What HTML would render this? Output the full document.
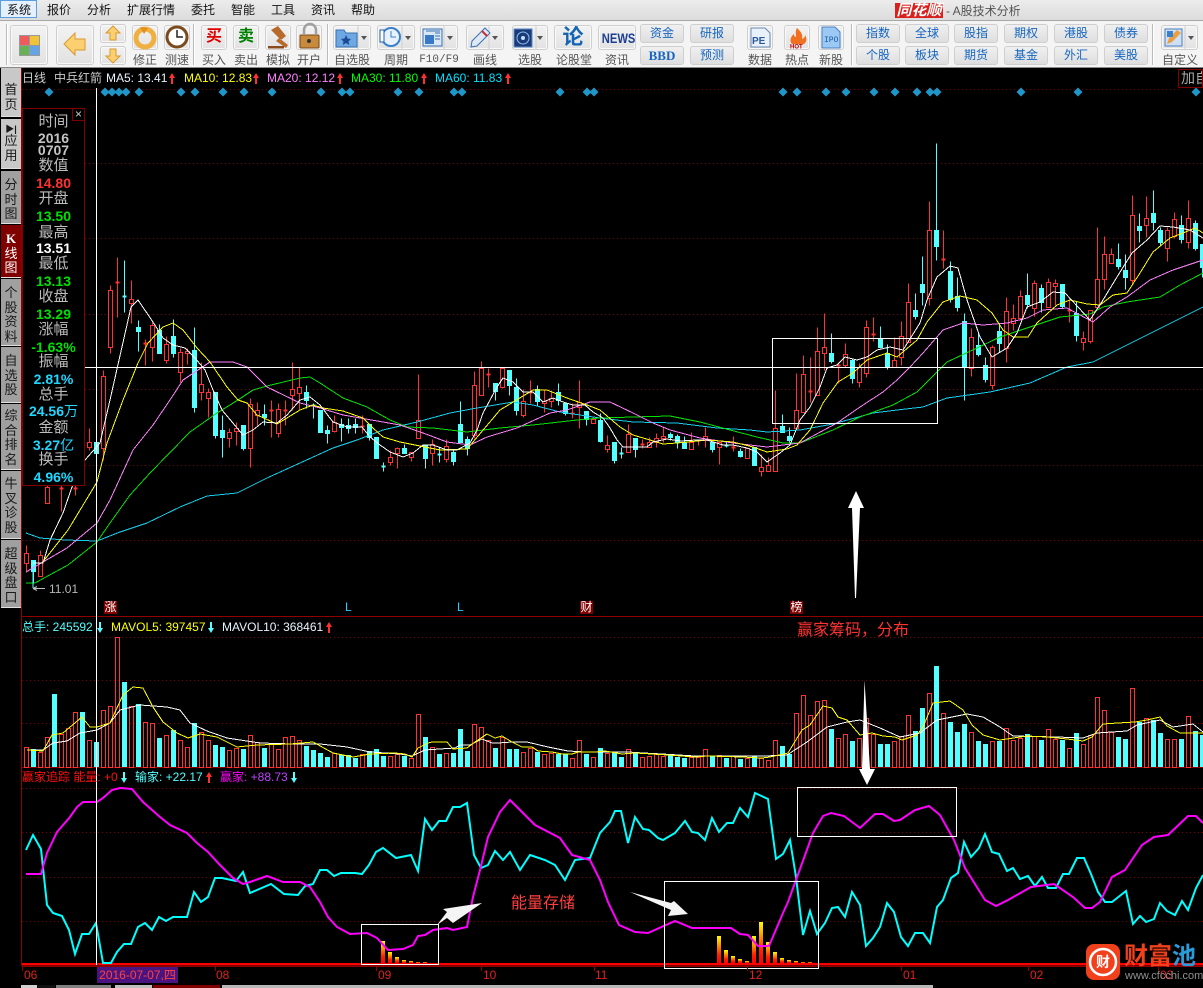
<!DOCTYPE html>
<html><head><meta charset="utf-8"><title>A股技术分析</title>
<style>
html,body{margin:0;padding:0;width:1203px;height:988px;overflow:hidden;background:#000}
body{position:relative;font-family:"Liberation Sans","WenQuanYi Zen Hei","Noto Sans CJK SC",sans-serif;font-size:12px}
.a{position:absolute;white-space:nowrap}
#menu{position:absolute;left:0;top:0;width:1203px;height:20px;background:linear-gradient(#ececec,#dcdcdc);border-bottom:1px solid #a8a8a8}
#tool{position:absolute;left:0;top:21px;width:1203px;height:46px;background:#f4f4f4;border-bottom:1px solid #8a8a8a}
.m{position:absolute;top:3px;color:#111;font-size:12px;line-height:14px}
.b{position:absolute;box-sizing:border-box;background:linear-gradient(#f2f2f2,#e2e2e2);border:1px solid #cfcfcf;border-radius:3px;box-shadow:inset 0 0 0 1px #f8f8f8}
.l{position:absolute;top:53px;color:#555;font-size:12px;line-height:14px;transform:translateX(-50%);white-space:nowrap}
.g{position:absolute;box-sizing:border-box;width:44px;height:19px;background:linear-gradient(#f0f0f0,#dedede);border:1px solid #cfcfcf;border-radius:3px;color:#1565c0;font-size:12px;line-height:17px;text-align:center}
.h{position:absolute;top:24px;width:1px;height:41px;background:#bbb;border-right:1px solid #fff}
.t{position:absolute;left:1px;width:20px;box-sizing:border-box;background:#a0a0a0;color:#1a1a1a;font-size:13px;line-height:14.5px;text-align:center;padding-top:7px;border-bottom:1px solid #e0e0e0}
#info{position:absolute;left:22px;top:108px;width:63px;height:378px;box-sizing:border-box;background:#000;border:1px solid #800000}
.r{position:absolute;left:0;width:61px;text-align:center;white-space:nowrap;color:#bdbdbd;font-size:15px;line-height:16px}
.n{font-weight:bold;font-size:14px}
.sq{position:absolute;width:13px;height:13px;background:#800000;color:#fff;font-size:12px;line-height:13px;text-align:center}
</style></head><body>
<div id="menu">
<div class="a" style="left:0;top:0;width:37px;height:18px;box-sizing:border-box;border:1px solid #5aa0e0;background:#e4f0fb"></div>
<span class="m" style="left:7px">系统</span><span class="m" style="left:47px">报价</span><span class="m" style="left:87px">分析</span><span class="m" style="left:127px">扩展行情</span><span class="m" style="left:191px">委托</span><span class="m" style="left:231px">智能</span><span class="m" style="left:271px">工具</span><span class="m" style="left:311px">资讯</span><span class="m" style="left:351px">帮助</span>
<div class="a" style="left:895px;top:3px;width:48px;height:15px;background:#d8201c;color:#fff;font-weight:bold;font-style:italic;font-size:15px;line-height:15px;text-align:center">同花顺</div>
<span class="a" style="left:946px;top:4px;color:#555;font-size:12px;line-height:14px">- A股技术分析</span>
</div>
<div id="tool"></div>
<div class="h" style="left:6px"></div><div class="h" style="left:193px"></div><div class="h" style="left:327px"></div><div class="h" style="left:851px"></div><div class="h" style="left:1152px"></div>
<div class="b" style="left:10px;top:25px;width:38px;height:40px"></div>
<div class="b" style="left:56px;top:25px;width:38px;height:40px"></div>
<div class="b" style="left:100px;top:24px;width:26px;height:19px"></div>
<div class="b" style="left:100px;top:46px;width:26px;height:19px"></div>
<div class="b" style="left:132px;top:25px;width:26px;height:25px"></div>
<div class="b" style="left:164px;top:25px;width:26px;height:25px"></div>
<div class="b" style="left:201px;top:25px;width:26px;height:25px"></div>
<div class="b" style="left:233px;top:25px;width:26px;height:25px"></div>
<div class="b" style="left:265px;top:25px;width:26px;height:25px"></div>
<div class="b" style="left:296px;top:25px;width:26px;height:25px"></div>
<div class="b" style="left:333px;top:25px;width:38px;height:25px"></div>
<div class="b" style="left:377px;top:25px;width:38px;height:25px"></div>
<div class="b" style="left:420px;top:25px;width:38px;height:25px"></div>
<div class="b" style="left:466px;top:25px;width:38px;height:25px"></div>
<div class="b" style="left:512px;top:25px;width:36px;height:25px"></div>
<div class="b" style="left:554px;top:25px;width:38px;height:25px"></div>
<div class="b" style="left:598px;top:25px;width:38px;height:25px"></div>
<div class="b" style="left:747px;top:25px;width:26px;height:25px"></div>
<div class="b" style="left:784px;top:25px;width:26px;height:25px"></div>
<div class="b" style="left:818px;top:25px;width:26px;height:25px"></div>
<div class="b" style="left:1161px;top:25px;width:37px;height:25px"></div>
<span class="l" style="left:145px">修正</span><span class="l" style="left:177px">测速</span><span class="l" style="left:214px">买入</span><span class="l" style="left:246px">卖出</span><span class="l" style="left:278px">模拟</span><span class="l" style="left:309px">开户</span><span class="l" style="left:352px">自选股</span><span class="l" style="left:396px">周期</span><span class="l" style="left:439px;font-family:'Liberation Mono',monospace;font-size:11px">F10/F9</span><span class="l" style="left:485px">画线</span><span class="l" style="left:530px">选股</span><span class="l" style="left:574px">论股堂</span><span class="l" style="left:617px">资讯</span><span class="l" style="left:760px">数据</span><span class="l" style="left:797px">热点</span><span class="l" style="left:831px">新股</span><span class="l" style="left:1180px">自定义</span>
<span class="a" style="left:204px;top:28px;width:20px;text-align:center;color:#e00000;font-size:16px;font-weight:bold;line-height:18px">买</span>
<span class="a" style="left:236px;top:28px;width:20px;text-align:center;color:#008000;font-size:16px;font-weight:bold;line-height:18px">卖</span>
<span class="a" style="left:556px;top:26px;width:34px;text-align:center;color:#1464b4;font-size:21px;font-weight:bold;line-height:23px">论</span>
<span class="a" style="left:598px;top:30px;width:38px;text-align:center;color:#1c3f94;font-size:14px;font-weight:bold;line-height:16px;transform:scaleX(.8)">NEWS</span>
<div class="g" style="left:640px;top:24px">资金</div><div class="g" style="left:640px;top:46px;font-family:'Liberation Serif',serif;font-weight:bold;font-size:13px">BBD</div>
<div class="g" style="left:690px;top:24px">研报</div><div class="g" style="left:690px;top:46px">预测</div>
<div class="g" style="left:856px;top:24px">指数</div><div class="g" style="left:905px;top:24px">全球</div><div class="g" style="left:954px;top:24px">股指</div><div class="g" style="left:1004px;top:24px">期权</div><div class="g" style="left:1054px;top:24px">港股</div><div class="g" style="left:1104px;top:24px">债券</div>
<div class="g" style="left:856px;top:46px">个股</div><div class="g" style="left:905px;top:46px">板块</div><div class="g" style="left:954px;top:46px">期货</div><div class="g" style="left:1004px;top:46px">基金</div><div class="g" style="left:1054px;top:46px">外汇</div><div class="g" style="left:1104px;top:46px">美股</div>

<svg class="a" style="left:0;top:0" width="1203" height="988" viewBox="0 0 1203 988" xmlns="http://www.w3.org/2000/svg">
<defs><linearGradient id="e" x1="0" y1="0" x2="0" y2="1"><stop offset="0" stop-color="#ffff00"/><stop offset=".3" stop-color="#ffa000"/><stop offset=".7" stop-color="#ff2000"/><stop offset="1" stop-color="#ff0000"/></linearGradient></defs>
<!-- toolbar icons -->
<g stroke="#999" stroke-width="1"><rect x="19.5" y="35.5" width="10" height="10" fill="#f05a5a"/><rect x="29.5" y="35.5" width="10" height="10" fill="#f0c438"/><rect x="19.5" y="45.5" width="10" height="10" fill="#66b055"/><rect x="29.5" y="45.5" width="10" height="10" fill="#64a4e4"/></g>
<path d="M64 44L75 33V39H85V50H75V55Z" fill="#fbd070" stroke="#d89a30"/>
<path d="M113 26L120 33H116V40H110V33H106Z" fill="#fbd070" stroke="#d89a30"/>
<path d="M113 63L120 56H116V49H110V56H106Z" fill="#fbd070" stroke="#d89a30"/>
<circle cx="145" cy="38" r="9" fill="none" stroke="#f0b040" stroke-width="5"/><path d="M140 27l8 1-4 6z" fill="#e09020"/>
<circle cx="177" cy="37" r="10" fill="#fff" stroke="#7a4a1c" stroke-width="3"/><path d="M177 30v7h6" fill="none" stroke="#222" stroke-width="1.5"/>
<path d="M271 30l7-4 8 10-5 4zM279 38l-3 3 10 7 2-3z" fill="#b86a2c"/><rect x="268" y="46" width="16" height="2.5" fill="#8c4a1c"/>
<path d="M304 34v-4a6 6 0 0 1 12 0v4" fill="none" stroke="#a0a0a0" stroke-width="2.5"/><rect x="300" y="35" width="19" height="13" rx="1" fill="#c88a3c" stroke="#7a4a1c"/><circle cx="309" cy="41" r="2" fill="#333"/>
<path d="M336 30h8l2 3h11v14h-21z" fill="#6ea8e4" stroke="#3a70b0"/><path d="M346 35l1.500 3.500 3.500.5-2.500 2.500.7 3.500-3.200-2-3.200 2 .7-3.500-2.500-2.500 3.500-.5z" fill="#1c4a94"/>
<path d="M358 26v23" stroke="#cfcfcf"/><path d="M361 36h6l-3 4z M405 36h6l-3 4z M447 36h6l-3 4z M492 36h6l-3 4z M537 36h6l-3 4z M1188 36h6l-3 4z" fill="#555"/>
<path d="M402 26v23M444 26v23M489 26v23M536 26v23M1185 26v23" stroke="#cfcfcf"/>
<circle cx="391" cy="37" r="9" fill="#e8f2ff" stroke="#3a80c8" stroke-width="2"/><path d="M391 31v6h5" fill="none" stroke="#3a80c8"/><rect x="380" y="30" width="4" height="12" fill="#fff" stroke="#2060b0"/>
<rect x="423" y="29" width="19" height="17" fill="#d8e8f8" stroke="#3a70b0"/><rect x="425" y="35" width="9" height="9" fill="#3a78c8"/><path d="M435 33h5M435 36h5M435 39h5M426 31h14" stroke="#3a70b0"/>
<path d="M471 47l1-6 13-13 5 5-13 13z" fill="#dfe8f4" stroke="#3a70b0"/><path d="M482 31l5 5" stroke="#c83030" stroke-width="2"/>
<rect x="514" y="29" width="18" height="18" fill="#1c3a78" stroke="#5a8ac8"/><circle cx="523" cy="38" r="6" fill="none" stroke="#8ac0f0"/><circle cx="523" cy="38" r="2" fill="#c0e0ff"/>
<path d="M751 28h14l5 5v14h-19z" fill="#e8f0fa" stroke="#6a8ab0"/><text x="752" y="44" font-size="10" font-weight="bold" fill="#2a5a9a" font-family="Liberation Sans">PE</text>
<path d="M797 28c4 4 6 6 5 11 3-1 3-3 3-4 2 3 2 7-1 9h-12c-3-3-1-8 2-10 0 2 1 3 2 3 0-3-1-6 1-9z" fill="#f07020"/><text x="790" y="48.500" font-size="6" font-weight="bold" fill="#c00000" font-family="Liberation Sans">HOT</text>
<path d="M822 27h13l5 5v16h-18z" fill="#9cc8f4" stroke="#4a80c0"/><text x="824" y="42" font-size="8" fill="#1c5aa0" font-family="Liberation Mono">IPO</text>
<rect x="1165" y="29" width="17" height="17" fill="#cfe0f4" stroke="#4a80c0"/><path d="M1167 44l2-6 8-8 4 3-9 9z" fill="#e8a040"/><rect x="1167" y="31" width="6" height="6" fill="#3a80d0"/>
<!-- grid -->
<g stroke="#800000" stroke-dasharray="1 3" fill="none"><path d="M22 89.500H1180M85 163.500H1203M85 238.500H1203M85 314.500H1203M85 389.500H1203M85 465.500H1203M22 540.500H1203M22 637.500H1203M22 680.500H1203M22 723.500H1203M22 788.500H1203M22 832.500H1203M22 877.500H1203M22 921.500H1203"/></g>
<path d="M21.500 68V966M22 616.500H1203M22 767.500H1203M22 966.500H1203" stroke="#900000"/>
<g transform="translate(.5 .5)" fill="none">
<!-- candles red -->
<path stroke="#ff3232" d="M26 545V572M40 550V576M47 470V503M61 480V511M75 480V495M89 428V450M96 453V465M103 370V460M110 285V353M117 257V317M131 280V323M145 339V365M152 322V361M166 336V363M180 348V382M187 348V364M201 362V400M208 388V417M229 428V447M236 422V445M250 398V467M257 402V425M271 400V437M278 403V437M285 400V425M292 362V410M299 367V410M334 415V432M362 415V433M390 450V465M397 447V468M411 452V461M418 374V438M432 439V465M446 439V462M474 371V438M481 361V395M488 368V387M502 367V388M523 389V417M530 380V403M544 390V412M551 390V407M572 403V418M579 380V428M593 417V423M607 435V452M628 424V452M642 439V448M649 437V447M656 433V447M663 427V442M691 432V449M698 440V445M705 427V447M719 442V464M733 436V451M747 448V458M761 454V476M768 457V471M775 390V471M796 373V428M803 355V412M810 357V402M817 327V395M824 313V370M838 362V383M845 343V367M859 363V387M866 320V377M873 317V341M894 337V367M901 321V365M908 283V342M929 201V305M943 230V268M971 328V376M992 345V389M1006 297V362M1013 304V330M1020 290V320M1034 280V316M1048 278V307M1055 279V305M1069 300V322M1083 331V350M1090 310V343M1097 227V310M1104 236V289M1111 248V263M1132 195V283M1146 196V237M1167 227V261M1174 212V238M1188 200V248"/>
<path stroke="#ff3232" fill="#000" d="M24 553h4V563h-4zM38 555h4V576h-4zM45 487h4V503h-4zM87 442h4V447h-4zM101 376h4V448h-4zM108 290h4V347h-4zM129 299h4V303h-4zM150 325h4V347h-4zM164 344h4V360h-4zM178 352h4V372h-4zM185 351h4V353h-4zM199 384h4V392h-4zM206 392h4V398h-4zM227 432h4V438h-4zM234 428h4V431h-4zM248 404h4V448h-4zM255 410h4V415h-4zM276 409h4V433h-4zM290 389h4V395h-4zM297 387h4V393h-4zM332 422h4V431h-4zM388 457h4V462h-4zM395 448h4V453h-4zM409 452h4V457h-4zM416 420h4V438h-4zM430 444h4V453h-4zM444 446h4V459h-4zM472 385h4V435h-4zM479 368h4V395h-4zM500 368h4V387h-4zM521 401h4V415h-4zM542 401h4V403h-4zM549 398h4V401h-4zM577 402h4V407h-4zM591 419h4V423h-4zM605 445h4V449h-4zM626 434h4V452h-4zM647 442h4V447h-4zM654 438h4V442h-4zM661 436h4V438h-4zM689 442h4V449h-4zM703 436h4V440h-4zM717 442h4V447h-4zM745 448h4V458h-4zM759 467h4V471h-4zM766 465h4V471h-4zM773 428h4V471h-4zM794 410h4V428h-4zM801 374h4V412h-4zM815 351h4V395h-4zM822 347h4V353h-4zM843 354h4V365h-4zM857 367h4V382h-4zM864 327h4V373h-4zM892 360h4V367h-4zM899 336h4V357h-4zM906 302h4V342h-4zM927 230h4V298h-4zM969 337h4V368h-4zM990 347h4V385h-4zM1004 311h4V348h-4zM1011 318h4V323h-4zM1018 296h4V318h-4zM1032 283h4V308h-4zM1046 282h4V307h-4zM1053 283h4V286h-4zM1081 338h4V342h-4zM1088 310h4V341h-4zM1095 279h4V307h-4zM1102 254h4V279h-4zM1109 254h4V263h-4zM1130 215h4V280h-4zM1144 218h4V225h-4zM1165 230h4V248h-4zM1172 219h4V236h-4zM1186 218h4V242h-4z"/>
<path stroke="#ff3232" stroke-width="2" d="M59 488h4M73 488h4M115 282h4M143 343h4M269 410h4M283 410h4M360 426h4M486 374h4M528 392h4M570 413h4M640 444h4M696 440h4M731 447h4M808 391h4M836 365h4M871 334h4M941 259h4M1067 310h4"/>
<!-- candles cyan -->
<path stroke="#54ffff" d="M33 560V583M96 430V453M124 260V312M138 320V351M159 324V353M173 319V357M194 327V412M215 392V438M222 415V457M243 425V450M264 404V425M306 385V408M313 403V418M327 425V443M341 418V441M348 418V433M355 418V433M369 424V440M383 462V471M404 444V453M425 444V468M439 447V462M453 450V465M460 401V442M467 436V455M495 383V400M509 370V395M516 378V415M537 385V406M558 383V405M565 402V415M586 411V425M600 413V442M614 442V463M621 447V458M635 438V457M670 432V440M677 434V448M684 436V448M712 442V452M726 442V447M740 448V457M782 414V432M789 427V442M831 333V363M852 358V383M880 326V347M887 344V369M915 293V319M922 256V305M936 143V260M950 261V302M957 277V311M964 313V400M978 333V356M985 357V382M999 323V352M1027 273V308M1041 284V312M1062 284V308M1076 301V341M1118 243V269M1125 254V289M1139 213V242M1153 190V230M1160 227V246M1181 215V243M1195 220V250M1202 244V277"/>
<path stroke="#54ffff" fill="#54ffff" d="M31 560h4V571h-4zM94 442h4V453h-4zM136 327h4V331h-4zM157 330h4V353h-4zM171 336h4V353h-4zM192 350h4V407h-4zM213 392h4V435h-4zM220 430h4V437h-4zM241 425h4V448h-4zM262 414h4V417h-4zM304 392h4V400h-4zM318 410h4V432h-4zM325 430h4V433h-4zM339 424h4V427h-4zM346 425h4V428h-4zM353 424h4V427h-4zM367 424h4V437h-4zM374 437h4V458h-4zM402 448h4V453h-4zM423 445h4V458h-4zM451 452h4V461h-4zM458 424h4V442h-4zM465 439h4V448h-4zM493 383h4V391h-4zM507 370h4V385h-4zM514 387h4V410h-4zM535 389h4V401h-4zM556 392h4V400h-4zM563 403h4V413h-4zM584 411h4V419h-4zM598 420h4V441h-4zM612 442h4V460h-4zM633 438h4V449h-4zM668 434h4V437h-4zM675 436h4V442h-4zM682 442h4V448h-4zM710 442h4V449h-4zM738 451h4V456h-4zM752 447h4V465h-4zM780 426h4V432h-4zM787 436h4V440h-4zM829 353h4V361h-4zM850 360h4V378h-4zM878 339h4V347h-4zM885 353h4V367h-4zM913 310h4V316h-4zM920 284h4V292h-4zM934 230h4V246h-4zM948 271h4V299h-4zM955 296h4V307h-4zM962 321h4V367h-4zM976 345h4V354h-4zM983 365h4V379h-4zM997 331h4V343h-4zM1025 295h4V304h-4zM1039 288h4V302h-4zM1060 284h4V306h-4zM1074 313h4V335h-4zM1116 259h4V266h-4zM1123 270h4V277h-4zM1137 226h4V230h-4zM1151 213h4V222h-4zM1158 230h4V242h-4zM1179 225h4V239h-4zM1193 223h4V248h-4zM1200 244h4V267h-4z"/>
<path stroke="#54ffff" stroke-width="2" d="M122 296h4M311 405h4M381 466h4M437 454h4M619 453h4M724 445h4"/>
<!-- volume red -->
<path stroke="#ff3232" d="M24 747h4V767h-4zM38 752h4V767h-4zM45 737h4V767h-4zM59 734h4V767h-4zM66 728h4V767h-4zM73 712h4V767h-4zM87 740h4V767h-4zM101 710h4V767h-4zM108 706h4V767h-4zM115 637h4V767h-4zM129 706h4V767h-4zM143 722h4V767h-4zM150 723h4V767h-4zM164 735h4V767h-4zM178 740h4V767h-4zM185 747h4V767h-4zM199 732h4V767h-4zM206 740h4V767h-4zM227 750h4V767h-4zM234 748h4V767h-4zM248 735h4V767h-4zM255 742h4V767h-4zM269 743h4V767h-4zM276 749h4V767h-4zM283 737h4V767h-4zM290 736h4V767h-4zM297 740h4V767h-4zM332 753h4V767h-4zM360 754h4V767h-4zM388 756h4V767h-4zM395 754h4V767h-4zM409 758h4V767h-4zM416 714h4V767h-4zM430 747h4V767h-4zM444 753h4V767h-4zM472 724h4V767h-4zM479 727h4V767h-4zM486 740h4V767h-4zM500 737h4V767h-4zM521 752h4V767h-4zM528 748h4V767h-4zM542 754h4V767h-4zM549 753h4V767h-4zM570 758h4V767h-4zM577 740h4V767h-4zM591 757h4V767h-4zM605 753h4V767h-4zM626 749h4V767h-4zM640 757h4V767h-4zM647 756h4V767h-4zM654 754h4V767h-4zM661 756h4V767h-4zM689 757h4V767h-4zM696 757h4V767h-4zM703 749h4V767h-4zM717 755h4V767h-4zM731 756h4V767h-4zM745 758h4V767h-4zM759 758h4V767h-4zM766 760h4V767h-4zM773 740h4V767h-4zM794 713h4V767h-4zM801 695h4V767h-4zM808 715h4V767h-4zM815 701h4V767h-4zM822 700h4V767h-4zM836 738h4V767h-4zM843 734h4V767h-4zM857 738h4V767h-4zM864 718h4V767h-4zM871 734h4V767h-4zM892 741h4V767h-4zM899 736h4V767h-4zM906 715h4V767h-4zM927 693h4V767h-4zM941 713h4V767h-4zM969 732h4V767h-4zM990 741h4V767h-4zM1004 728h4V767h-4zM1011 740h4V767h-4zM1018 738h4V767h-4zM1032 736h4V767h-4zM1046 729h4V767h-4zM1053 739h4V767h-4zM1067 748h4V767h-4zM1081 744h4V767h-4zM1088 735h4V767h-4zM1095 697h4V767h-4zM1102 710h4V767h-4zM1109 732h4V767h-4zM1130 688h4V767h-4zM1144 718h4V767h-4zM1165 739h4V767h-4zM1172 739h4V767h-4zM1186 716h4V767h-4z"/>
<!-- volume cyan -->
<path stroke="#54ffff" fill="#54ffff" d="M31 749h4V766h-4zM52 694h4V766h-4zM80 712h4V766h-4zM94 742h4V766h-4zM122 682h4V766h-4zM136 704h4V766h-4zM157 738h4V766h-4zM171 730h4V766h-4zM192 723h4V766h-4zM213 745h4V766h-4zM220 747h4V766h-4zM241 749h4V766h-4zM262 748h4V766h-4zM304 746h4V766h-4zM311 750h4V766h-4zM318 753h4V766h-4zM325 757h4V766h-4zM339 755h4V766h-4zM346 755h4V766h-4zM353 758h4V766h-4zM367 751h4V766h-4zM374 749h4V766h-4zM381 756h4V766h-4zM402 756h4V766h-4zM423 737h4V766h-4zM437 754h4V766h-4zM451 753h4V766h-4zM458 729h4V766h-4zM465 751h4V766h-4zM493 748h4V766h-4zM507 749h4V766h-4zM514 749h4V766h-4zM535 752h4V766h-4zM556 754h4V766h-4zM563 754h4V766h-4zM584 754h4V766h-4zM598 748h4V766h-4zM612 752h4V766h-4zM619 757h4V766h-4zM633 753h4V766h-4zM668 755h4V766h-4zM675 757h4V766h-4zM682 758h4V766h-4zM710 756h4V766h-4zM724 758h4V766h-4zM738 759h4V766h-4zM752 756h4V766h-4zM780 746h4V766h-4zM787 754h4V766h-4zM829 729h4V766h-4zM850 741h4V766h-4zM878 744h4V766h-4zM885 744h4V766h-4zM913 731h4V766h-4zM920 708h4V766h-4zM934 666h4V766h-4zM948 722h4V766h-4zM955 732h4V766h-4zM962 724h4V766h-4zM976 741h4V766h-4zM983 744h4V766h-4zM997 741h4V766h-4zM1025 734h4V766h-4zM1039 740h4V766h-4zM1060 740h4V766h-4zM1074 733h4V766h-4zM1116 737h4V766h-4zM1123 739h4V766h-4zM1137 722h4V766h-4zM1151 720h4V766h-4zM1158 733h4V766h-4zM1179 739h4V766h-4zM1193 731h4V766h-4zM1200 735h4V766h-4z"/>
</g>
<!-- MAs -->
<g fill="none" stroke-width="1" shape-rendering="crispEdges">
<polyline stroke="#12cfee" points="26,533 40,538 65,540 97,541 120,532 147,523 180,507 207,496 237,493 267,478 300,463 333,448 357,440 383,430 417,422 450,413 477,408 513,402 533,405 560,412 600,418 633,422 677,423 717,428 750,430 767,432 800,430 833,424 873,413 897,410 923,407 947,398 990,392 1030,383 1067,367 1093,362 1127,345 1167,325 1203,307"/>
<polyline stroke="#00e000" points="26,583 35,583 68,565 97,542 110,523 130,495 150,473 190,432 217,413 238,400 253,390 267,386 300,378 310,377 320,383 343,398 367,407 390,420 407,427 433,428 467,432 500,428 533,425 577,420 600,418 633,417 670,416 700,422 730,430 757,437 783,443 800,443 833,430 860,417 893,405 917,392 937,372 947,362 977,348 1000,337 1027,328 1060,317 1090,314 1103,307 1127,302 1160,297 1180,285 1203,273"/>
<polyline stroke="#ff80ff" points="26,572 43,562 67,548 97,523 110,500 133,450 153,425 170,400 183,380 210,362 233,362 247,367 267,387 300,403 320,408 343,415 383,422 400,425 423,433 447,442 470,445 487,437 517,428 550,413 567,410 590,402 610,402 633,413 653,423 670,430 700,438 733,443 767,447 783,445 800,443 837,423 860,407 883,392 897,380 910,367 923,353 943,330 963,323 983,325 1007,323 1027,318 1043,310 1067,308 1093,322 1110,307 1127,297 1150,280 1173,270 1203,260"/>
<polyline stroke="#ffff00" points="33,563 42,563 68,530 97,482 107,443 123,400 138,363 148,343 163,327 173,323 183,330 197,348 210,362 227,387 238,400 247,403 257,415 277,424 300,410 313,405 323,408 343,411 363,418 373,428 383,437 400,442 420,446 440,450 467,449 473,442 500,410 533,390 547,390 567,398 587,405 600,410 620,427 633,435 650,440 663,444 677,443 707,440 733,442 753,447 767,452 787,449 797,445 810,430 823,403 838,382 853,373 867,360 887,353 897,357 917,340 927,322 943,302 960,296 977,300 992,313 1003,330 1013,337 1028,337 1037,323 1057,305 1070,300 1087,304 1100,305 1113,295 1127,293 1140,273 1153,252 1170,238 1183,233 1195,228 1203,233"/>
<polyline stroke="#fff" points="33,563 43,563 50,540 63,513 72,487 85,460 100,443 110,400 131,307 138,300 153,322 163,338 173,345 185,348 195,358 205,370 213,390 222,410 243,435 253,430 263,422 277,423 287,415 300,400 310,397 320,405 333,422 347,427 362,427 370,437 380,445 390,452 403,457 413,453 423,445 433,445 447,450 457,450 470,443 477,430 483,413 497,387 503,378 513,382 523,392 533,392 543,402 553,398 563,402 573,405 585,405 593,412 603,418 610,428 617,440 623,447 637,447 647,447 653,442 667,439 680,441 697,440 707,440 723,445 733,445 747,448 757,452 767,462 780,453 790,445 800,420 810,407 820,387 827,368 837,365 845,357 857,360 867,357 877,350 890,347 903,350 920,323 927,300 937,277 950,266 958,268 967,300 980,337 992,357 1007,348 1017,333 1027,307 1040,302 1053,292 1065,293 1078,307 1090,320 1103,300 1117,277 1132,253 1147,240 1160,226 1173,227 1190,230 1203,238"/>
<!-- volume MAs -->
<polyline stroke="#fff" points="27,750 43,750 53,743 67,741 80,733 97,730 110,723 120,710 140,705 167,707 180,710 190,723 207,731 227,738 260,743 293,744 320,744 347,747 370,752 400,754 412,756 425,750 455,748 460,745 470,745 482,739 492,743 498,743 512,742 527,742 548,747 568,751 585,752 628,752 643,753 662,754 695,756 728,756 765,756 787,755 807,742 827,727 847,722 860,720 880,728 900,737 920,733 937,720 967,714 983,717 1000,727 1013,736 1057,737 1083,738 1097,733 1127,731 1137,725 1160,720 1173,727 1193,724 1203,732"/>
<polyline stroke="#ffff00" points="27,750 43,751 52,735 63,733 82,717 90,727 97,727 110,723 123,695 133,687 143,688 153,707 163,722 177,733 188,738 200,734 217,737 237,747 257,745 290,744 313,742 333,753 353,757 370,754 395,753 405,754 412,757 418,748 428,743 432,742 442,742 447,742 453,749 467,748 475,742 487,734 495,738 502,736 512,742 522,747 532,747 538,751 552,752 562,754 572,754 578,752 595,752 605,751 622,754 635,753 652,754 668,755 695,757 708,756 742,757 762,758 770,757 788,753 802,730 810,725 823,706 832,708 838,717 847,720 860,735 872,733 883,736 895,737 902,740 917,735 923,727 933,703 950,701 963,710 972,725 983,735 1000,740 1027,736 1047,737 1067,739 1083,741 1092,737 1103,724 1118,723 1135,722 1147,720 1160,717 1167,726 1180,733 1203,733"/>
</g>
<!-- energy bars -->
<g fill="url(#e)"><rect x="381" y="941" width="4" height="22"/><rect x="388" y="952" width="4" height="11"/><rect x="395" y="957" width="4" height="6"/><rect x="402" y="960" width="4" height="3"/><rect x="409" y="961" width="4" height="2"/><rect x="416" y="962" width="4" height="1"/><rect x="423" y="962" width="4" height="1"/><rect x="717" y="936" width="4" height="27"/><rect x="724" y="950" width="4" height="13"/><rect x="731" y="956" width="4" height="7"/><rect x="738" y="959" width="4" height="4"/><rect x="745" y="961" width="4" height="2"/><rect x="752" y="936" width="4" height="27"/><rect x="759" y="922" width="4" height="41"/><rect x="766" y="942" width="4" height="21"/><rect x="773" y="952" width="4" height="11"/><rect x="780" y="958" width="4" height="5"/><rect x="787" y="960" width="4" height="3"/><rect x="794" y="961" width="4" height="2"/><rect x="801" y="962" width="4" height="1"/><rect x="808" y="962" width="4" height="1"/></g>
<rect x="22" y="963" width="1181" height="2.500" fill="#ff0000"/>
<!-- energy lines -->
<polyline fill="none" stroke="#00ffff" stroke-width="2" points="26,850 33,835 41,849 47,905 53,913 62,916 69,930 75,954 82,934 89,934 96,923 103,963 111,963 117,952 124,944 131,944 138,927 145,923 152,930 159,917 166,921 173,917 187,917 194,892 201,902 208,897 215,878 222,878 236,881 243,872 250,893 257,890 271,884 284,894 298,895 305,886 313,884 320,870 327,870 334,876 341,873 355,873 362,874 369,865 376,852 383,848 396,858 411,855 418,871 425,819 432,830 439,821 446,821 453,807 460,807 467,803 474,855 481,868 488,865 495,851 503,860 510,852 520,870 530,855 545,860 555,865 565,880 575,860 590,858 600,833 610,822 615,811 621,811 628,843 635,817 643,829 649,830 658,838 663,840 675,833 685,821 692,832 698,833 705,840 712,818 719,832 727,823 733,823 740,808 748,817 755,793 768,799 776,859 783,854 790,840 796,877 803,935 810,911 817,934 825,923 832,908 838,907 845,917 852,892 860,905 866,946 873,938 880,927 887,903 894,912 901,937 908,946 915,933 923,933 930,943 937,907 943,900 951,878 958,873 964,842 971,857 979,848 985,834 992,852 999,854 1007,871 1013,868 1020,879 1028,876 1035,886 1042,877 1048,888 1056,888 1063,874 1069,874 1077,858 1084,858 1091,874 1098,892 1105,902 1112,902 1126,891 1133,924 1140,916 1146,922 1154,919 1160,903 1167,911 1175,915 1182,901 1188,910 1196,888 1203,875"/>
<polyline fill="none" stroke="#ff00ff" stroke-width="2" points="26,874 41,874 47,853 57,832 70,817 77,807 83,802 97,802 103,798 112,790 120,788 132,789 143,802 160,817 170,825 187,833 197,843 208,852 220,865 233,878 243,884 250,882 267,876 283,882 300,882 310,887 320,902 328,917 337,927 350,934 367,933 377,938 388,950 403,949 413,945 418,936 425,935 433,930 447,928 453,930 467,927 473,897 480,870 488,837 500,812 510,800 520,810 535,825 560,838 572,855 590,860 600,880 608,902 619,925 635,932 648,933 675,921 692,928 708,928 731,928 740,934 748,935 758,946 769,946 783,913 788,902 796,880 804,858 813,833 823,816 831,813 844,816 860,828 875,814 883,814 894,821 900,820 915,810 929,806 940,815 954,840 965,868 985,900 996,906 1008,900 1031,887 1054,884 1073,897 1085,908 1092,908 1100,902 1112,877 1125,870 1142,845 1154,837 1168,835 1188,816 1196,816 1203,823"/>
<!-- crosshair -->
<path d="M85 367.500H1203M96.500 88V965" stroke="#fff" stroke-width="1"/>
<!-- boxes -->
<g fill="none" stroke="#fff"><rect x="772.500" y="338.500" width="165" height="85"/><rect x="797.500" y="787.500" width="159" height="49"/><rect x="664.500" y="881.500" width="154" height="87"/><rect x="361.500" y="924.500" width="77" height="40"/></g>
<!-- hand arrows -->
<path d="M856 491L864 508H860L856 598H855L852 508H848Z" fill="#fff"/>
<path d="M864.500 680L870 769H875L867 785L859 769H862Z" fill="#fff"/>
<path d="M482 903L453 923 447 918 437 925 447 912 443 909Z" fill="#f4f4f4"/>
<path d="M630 892L671 903 674 901 688 914 668 916 671 910Z" fill="#f4f4f4"/>
<!-- diamonds -->
<g fill="#1e96c8"><path d="M49 87.500l4.500 4.500-4.500 4.500-4.500-4.500zM105 87.500l4.500 4.500-4.500 4.500-4.500-4.500zM112 87.500l4.500 4.500-4.500 4.500-4.500-4.500zM119 87.500l4.500 4.500-4.500 4.500-4.500-4.500zM126 87.500l4.500 4.500-4.500 4.500-4.500-4.500zM139 87.500l4.500 4.500-4.500 4.500-4.500-4.500zM181 87.500l4.500 4.500-4.500 4.500-4.500-4.500zM195 87.500l4.500 4.500-4.500 4.500-4.500-4.500zM223 87.500l4.500 4.500-4.500 4.500-4.500-4.500zM244 87.500l4.500 4.500-4.500 4.500-4.500-4.500zM272 87.500l4.500 4.500-4.500 4.500-4.500-4.500zM321 87.500l4.500 4.500-4.500 4.500-4.500-4.500zM342 87.500l4.500 4.500-4.500 4.500-4.500-4.500zM350 87.500l4.500 4.500-4.500 4.500-4.500-4.500zM398 87.500l4.500 4.500-4.500 4.500-4.500-4.500zM419 87.500l4.500 4.500-4.500 4.500-4.500-4.500zM454 87.500l4.500 4.500-4.500 4.500-4.500-4.500zM462 87.500l4.500 4.500-4.500 4.500-4.500-4.500zM560 87.500l4.500 4.500-4.500 4.500-4.500-4.500zM587 87.500l4.500 4.500-4.500 4.500-4.500-4.500zM594 87.500l4.500 4.500-4.500 4.500-4.500-4.500zM783 87.500l4.500 4.500-4.500 4.500-4.500-4.500zM797 87.500l4.500 4.500-4.500 4.500-4.500-4.500zM826 87.500l4.500 4.500-4.500 4.500-4.500-4.500zM846 87.500l4.500 4.500-4.500 4.500-4.500-4.500zM874 87.500l4.500 4.500-4.500 4.500-4.500-4.500zM895 87.500l4.500 4.500-4.500 4.500-4.500-4.500zM917 87.500l4.500 4.500-4.500 4.500-4.500-4.500zM930 87.500l4.500 4.500-4.500 4.500-4.500-4.500zM937 87.500l4.500 4.500-4.500 4.500-4.500-4.500zM1021 87.500l4.500 4.500-4.500 4.500-4.500-4.500zM1078 87.500l4.500 4.500-4.500 4.500-4.500-4.500zM1196 87.500l4.500 4.500-4.500 4.500-4.500-4.500z"/></g>
<!-- header arrows -->
<g fill="#ff3030"><path d="M172 73l3 5h-2v6h-2v-6h-2zM256 73l3 5h-2v6h-2v-6h-2zM340 73l3 5h-2v6h-2v-6h-2zM424 73l3 5h-2v6h-2v-6h-2zM508 73l3 5h-2v6h-2v-6h-2zM329 622l3 5h-2v6h-2v-6h-2zM209 772l3 5h-2v6h-2v-6h-2z"/></g>
<g fill="#54ffff"><path d="M100 633l3-5h-2v-6h-2v6h-2zM211 633l3-5h-2v-6h-2v6h-2zM124 783l3-5h-2v-6h-2v6h-2zM294 783l3-5h-2v-6h-2v6h-2z"/></g>
<!-- 11.01 arrow -->
<path d="M33 588.500h12M33 588.500l4-2M33 588.500l4 2" stroke="#c0c0c0" fill="none"/>
<path d="M33 570v18" stroke="#54ffff"/>
<!-- axis ticks -->
<path d="M22.500 966v5M215.500 966v5M376.500 966v5M481.500 966v5M594.500 966v5M747.500 966v5M901.500 966v5M1028.500 966v5M1158.500 966v5" stroke="#900000"/>
<!-- bottom strip -->
<rect x="21" y="985" width="16" height="3" fill="#d0d0d0"/><rect x="37" y="985" width="18" height="3" fill="#111"/><rect x="56" y="985" width="55" height="3" fill="#808080"/><rect x="115" y="985" width="37" height="3" fill="#c0c0c0"/><rect x="153" y="985" width="67" height="3" fill="#800000"/><rect x="222" y="985" width="711" height="3" fill="#b8b8b8"/>
</svg>

<!-- header texts -->
<span class="a" style="left:22px;top:71px;color:#ccc;line-height:14px">日线</span><span class="a" style="left:54px;top:71px;color:#ccc;line-height:14px">中兵红箭</span>
<span class="a" style="left:106px;top:71px;color:#e8f4ff;line-height:14px">MA5: 13.41</span>
<span class="a" style="left:184px;top:71px;color:#ffff00;line-height:14px">MA10: 12.83</span>
<span class="a" style="left:267px;top:71px;color:#ff80ff;line-height:14px">MA20: 12.12</span>
<span class="a" style="left:351px;top:71px;color:#00ff00;line-height:14px">MA30: 11.80</span>
<span class="a" style="left:435px;top:71px;color:#00e0ff;line-height:14px">MA60: 11.83</span>
<div class="a" style="left:1178px;top:69px;width:25px;height:19px;box-sizing:border-box;border:1px solid #800000;color:#aaa;font-size:14px;line-height:17px;padding-left:2px;overflow:hidden">加自</div>

<!-- left tabs -->
<div class="t" style="top:68px;height:49px;background:#c8c8c8;padding-top:15px">首<br>页</div>
<div class="t" style="top:119px;height:50px;background:#c8c8c8;padding-top:5px"><span style="font-size:9px;line-height:10px;display:block;font-weight:bold">▶|</span>应<br>用</div>
<div class="t" style="top:171px;height:53px">分<br>时<br>图</div>
<div class="t" style="top:225px;height:53px;background:#800000;color:#fff"><b style="font-family:'Liberation Serif',serif">K</b><br>线<br>图</div>
<div class="t" style="top:279px;height:67px">个<br>股<br>资<br>料</div>
<div class="t" style="top:347px;height:56px">自<br>选<br>股</div>
<div class="t" style="top:404px;height:66px;padding-top:5px">综<br>合<br>排<br>名</div>
<div class="t" style="top:471px;height:68px;padding-top:6px">牛<br>叉<br>诊<br>股</div>
<div class="t" style="top:540px;height:68px">超<br>级<br>盘<br>口</div>

<!-- info panel -->
<div id="info">
<div class="a" style="right:-1px;top:-1px;width:13px;height:13px;box-sizing:border-box;border:1px solid #800000;color:#ccc;font-size:12px;line-height:11px;text-align:center">×</div>
<div class="r" style="top:5px">时间</div>
<div class="r n" style="top:21px;color:#c4c4c4">2016</div>
<div class="r n" style="top:33px;color:#c4c4c4">0707</div>
<div class="r" style="top:49px">数值</div>
<div class="r n" style="top:66px;color:#ff3232">14.80</div>
<div class="r" style="top:82px">开盘</div>
<div class="r n" style="top:99px;color:#00e000">13.50</div>
<div class="r" style="top:116px">最高</div>
<div class="r n" style="top:131px;color:#fff">13.51</div>
<div class="r" style="top:147px">最低</div>
<div class="r n" style="top:164px;color:#00e000">13.13</div>
<div class="r" style="top:180px">收盘</div>
<div class="r n" style="top:197px;color:#00e000">13.29</div>
<div class="r" style="top:213px">涨幅</div>
<div class="r n" style="top:230px;color:#00e000">-1.63%</div>
<div class="r" style="top:245px">振幅</div>
<div class="r n" style="top:262px;color:#20d8ff">2.81%</div>
<div class="r" style="top:278px">总手</div>
<div class="r n" style="top:294px;color:#20d8ff">24.56<span style="font-weight:normal;font-size:14px">万</span></div>
<div class="r" style="top:311px">金额</div>
<div class="r n" style="top:328px;color:#20d8ff">3.27<span style="font-weight:normal;font-size:14px">亿</span></div>
<div class="r" style="top:343px">换手</div>
<div class="r n" style="top:360px;color:#20d8ff">4.96%</div>
</div>

<span class="a" style="left:49px;top:582px;color:#b8b8b8;line-height:14px">11.01</span>
<div class="sq" style="left:104px;top:601px">涨</div>
<span class="a" style="left:345px;top:600px;color:#30c8ff;line-height:14px">L</span>
<span class="a" style="left:457px;top:600px;color:#30c8ff;line-height:14px">L</span>
<div class="sq" style="left:580px;top:601px">财</div>
<div class="sq" style="left:790px;top:601px">榜</div>

<span class="a" style="left:22px;top:620px;color:#54ffff;line-height:14px">总手: 245592</span>
<span class="a" style="left:111px;top:620px;color:#ffff00;line-height:14px">MAVOL5: 397457</span>
<span class="a" style="left:222px;top:620px;color:#e8f4ff;line-height:14px">MAVOL10: 368461</span>
<span class="a" style="left:797px;top:622px;color:#ff3232;font-size:16px;line-height:18px">赢家筹码，分布</span>

<span class="a" style="left:22px;top:770px;color:#ff1010;line-height:14px">赢家追踪 能量: +0</span>
<span class="a" style="left:135px;top:770px;color:#54ffff;line-height:14px">输家: +22.17</span>
<span class="a" style="left:220px;top:770px;color:#ff00ff;line-height:14px">赢家: <span style="color:#c040ff">+88.73</span></span>
<span class="a" style="left:511px;top:895px;color:#ff4040;font-size:16px;line-height:18px">能量存储</span>

<span class="a" style="left:24px;top:968px;color:#e02020;line-height:14px">06</span>
<div class="a" style="left:97px;top:967px;width:81px;height:16px;background:#4a1480;color:#ff4040;line-height:16px;text-align:center">2016-07-07,四</div>
<span class="a" style="left:216px;top:968px;color:#e02020;line-height:14px">08</span>
<span class="a" style="left:378px;top:968px;color:#e02020;line-height:14px">09</span>
<span class="a" style="left:483px;top:968px;color:#e02020;line-height:14px">10</span>
<span class="a" style="left:595px;top:968px;color:#e02020;line-height:14px">11</span>
<span class="a" style="left:749px;top:968px;color:#e02020;line-height:14px">12</span>
<span class="a" style="left:903px;top:968px;color:#e02020;line-height:14px">01</span>
<span class="a" style="left:1030px;top:968px;color:#e02020;line-height:14px">02</span>
<span class="a" style="left:1160px;top:968px;color:#e02020;line-height:14px">03</span>

<svg class="a" style="left:1086px;top:944px" width="34" height="36" viewBox="0 0 34 36"><rect width="34" height="36" rx="8" fill="#f0401c"/><circle cx="17" cy="18" r="13" fill="none" stroke="#fff" stroke-width="2.5"/></svg>
<span class="a" style="left:1096px;top:954px;color:#fff;font-size:14px;font-weight:bold;line-height:16px">财</span>
<span class="a" style="left:1124px;top:944px;color:#f0401c;font-size:24px;font-weight:bold;line-height:26px">财富<span style="color:#2a9ad8">池</span></span>
<span class="a" style="left:1125px;top:970px;color:#909090;font-size:11px;line-height:13px">www.cfcchi.com</span>
</body></html>
